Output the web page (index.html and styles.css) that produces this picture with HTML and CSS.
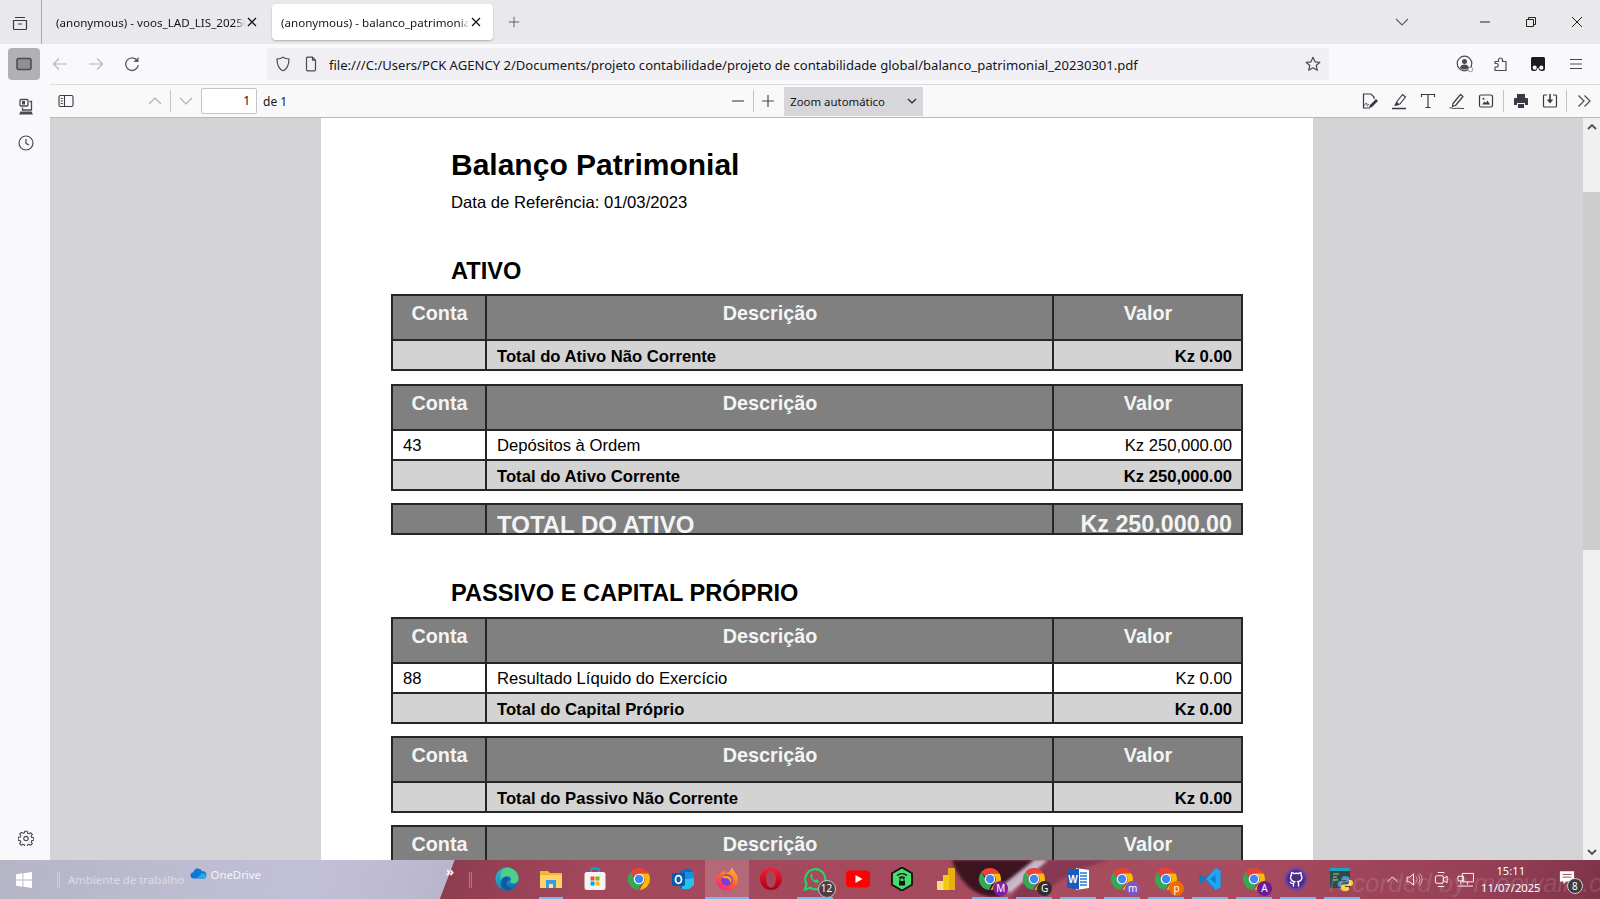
FILE: index.html
```html
<!DOCTYPE html>
<html lang="pt">
<head>
<meta charset="utf-8">
<title>balanco_patrimonial_20230301.pdf</title>
<link rel="stylesheet" href="styles.css">
</head>
<body>
<svg class="defs" width="0" height="0" aria-hidden="true">
  <symbol id="chrome" viewBox="0 0 24 24">
    <path d="M12 1a11 11 0 0 1 9.5 5.5H12a5.5 5.5 0 0 0-5 3.2L3.400 5A11 11 0 0 1 12 1z" fill="#ea4335"/>
    <path d="M21.500 6.500A11 11 0 0 1 12.500 23l4.300-7.500A5.500 5.500 0 0 0 16.800 9.200L12 6.500z" fill="#fbbc04"/>
    <path d="M3.400 5 7.700 12.500a5.500 5.500 0 0 0 6.300 4.500L11 23A11 11 0 0 1 3.400 5z" fill="#34a853"/>
    <circle cx="12" cy="12" r="5.300" fill="#fff"/>
    <circle cx="12" cy="12" r="4.200" fill="#4285f4"/>
  </symbol>
</svg>
<div class="app">
  <header class="tabbar">
    <div class="tab-menu">
      <svg class="i16" viewBox="0 0 16 16"><path d="M3 2.500h10M1.500 5.500h13v8a1 1 0 0 1-1 1h-11a1 1 0 0 1-1-1zM6 9h4" fill="none" stroke="#3a3a44" stroke-width="1.200"/></svg>
    </div>
    <div class="tab tab-first">
      <span class="tab-label">(anonymous) - voos_LAD_LIS_20250710.pdf</span>
      <svg class="tab-x" viewBox="0 0 10 10"><path d="M1 1l8 8M9 1l-8 8" stroke="#15141a" stroke-width="1.300"/></svg>
    </div>
    <div class="tab tab-active">
      <span class="tab-label">(anonymous) - balanco_patrimonial_20230301.pdf</span>
      <svg class="tab-x" viewBox="0 0 10 10"><path d="M1 1l8 8M9 1l-8 8" stroke="#15141a" stroke-width="1.300"/></svg>
    </div>
    <svg class="tab-plus" viewBox="0 0 16 16"><path d="M8 2v12M2 8h12" stroke="#5b5b66" stroke-width="1.100"/></svg>
    <div class="win-controls">
      <svg class="tab-list" viewBox="0 0 14 8"><path d="M1 1l6 6 6-6" fill="none" stroke="#5b5b66" stroke-width="1.100"/></svg>
      <div class="win-btn"><svg class="i12" viewBox="0 0 12 12"><path d="M1 6h10" stroke="#222" stroke-width="1"/></svg></div>
      <div class="win-btn"><svg class="i12" viewBox="0 0 12 12"><path d="M1.500 3.500h7v7h-7zM3.500 3.500v-2h7v7h-2" fill="none" stroke="#222" stroke-width="1"/></svg></div>
      <div class="win-btn"><svg class="i12" viewBox="0 0 12 12"><path d="M1 1l10 10M11 1L1 11" stroke="#222" stroke-width="1"/></svg></div>
    </div>
  </header>

  <nav class="navbar">
    <div class="side-toggle"><svg class="i16" viewBox="0 0 16 16"><rect x="1" y="2.500" width="14" height="11" rx="1.500" fill="#8f8f96" stroke="#4a4a55" stroke-width="1.500"/></svg></div>
    <div class="nav-btn"><svg class="i16" viewBox="0 0 16 16"><path d="M15 8H1.500M7 2.500 1.500 8 7 13.500" fill="none" stroke="#b5b5bb" stroke-width="1.200"/></svg></div>
    <div class="nav-btn"><svg class="i16" viewBox="0 0 16 16"><path d="M1 8h13.500M9 2.500 14.500 8 9 13.500" fill="none" stroke="#b5b5bb" stroke-width="1.200"/></svg></div>
    <div class="nav-btn"><svg class="i16" viewBox="0 0 16 16"><path d="M13.200 4.500A6.300 6.300 0 1 0 14.300 9" fill="none" stroke="#5b5b66" stroke-width="1.300"/><path d="M14.500 1v5h-5z" fill="#5b5b66"/></svg></div>
    <div class="urlbar">
      <svg class="i16 url-shield" viewBox="0 0 16 16"><path d="M8 1.200c2 1.300 3.800 1.700 6 1.800 0 6-1.500 9.800-6 11.800C3.500 12.800 2 9 2 3c2.200-.1 4-.5 6-1.800z" fill="none" stroke="#4a4a55" stroke-width="1.200"/></svg>
      <svg class="i16 url-page" viewBox="0 0 16 16"><path d="M3.500 2a.8.8 0 0 1 .8-.8h5.200l3 3v9.600a1 1 0 0 1-1 1H4.500a1 1 0 0 1-1-1z M9.500 1.200v3h3" fill="none" stroke="#4a4a55" stroke-width="1.200"/></svg>
      <span class="url-text">file:///C:/Users/PCK AGENCY 2/Documents/projeto contabilidade/projeto de contabilidade global/balanco_patrimonial_20230301.pdf</span>
      <svg class="i16 url-star" viewBox="0 0 16 16"><path d="M8 1.300l2 4.500 4.900.5-3.700 3.200 1.100 4.800L8 11.800l-4.300 2.500 1.100-4.800L1.100 6.300 6 5.800z" fill="none" stroke="#4a4a55" stroke-width="1.200" stroke-linejoin="round"/></svg>
    </div>
    <div class="nav-actions">
      <div class="nav-btn"><svg class="i18" viewBox="0 0 18 18"><circle cx="8.500" cy="8.500" r="7.300" fill="none" stroke="#4a4a55" stroke-width="1.200"/><circle cx="8.500" cy="6.500" r="2.500" fill="#4a4a55"/><path d="M4 13c.6-2.500 2.300-3.400 4.500-3.400s3.900.9 4.500 3.400c-2.500 2-6.500 2-9 0z" fill="#4a4a55"/><circle cx="14.500" cy="14.500" r="2.300" fill="#f9f9fb" stroke="#9a9aa2"/></svg></div>
      <div class="nav-btn"><svg class="i16" viewBox="0 0 16 16"><path d="M2 5.500h3.500V4a2 2 0 0 1 4 0v1.500H13V14.500H2V11h1.500a1.700 1.700 0 0 0 0-3.500H2z" fill="none" stroke="#4a4a55" stroke-width="1.200" stroke-linejoin="round"/></svg></div>
      <div class="nav-btn nav-btn-tab"><svg class="i16" viewBox="0 0 16 16"><path d="M2.500 1h11A1.500 1.500 0 0 1 15 2.500v10a2.500 2.500 0 0 1-2.500 2.500h-1.500A3 3 0 0 1 8.500 12h-1A3 3 0 0 1 5 15H3.500A2.500 2.500 0 0 1 1 12.500v-10A1.500 1.500 0 0 1 2.500 1z" fill="#1c1b22"/><circle cx="4.700" cy="11.700" r="2.100" fill="#f9f9fb"/><circle cx="11.300" cy="11.700" r="2.100" fill="#f9f9fb"/></svg></div>
      <div class="nav-btn nav-btn-menu"><svg class="i16" viewBox="0 0 16 16"><path d="M2 3.500h12M2 8h12M2 12.500h12" stroke="#4a4a55" stroke-width="1.200"/></svg></div>
    </div>
  </nav>

  <div class="workspace">
    <aside class="sidebar">
      <svg class="i18 side-ico" viewBox="0 0 18 18"><rect x="3" y="1.500" width="8" height="6.500" rx="1" fill="none" stroke="#4a4a55" stroke-width="1.300"/><rect x="5" y="3" width="3" height="3.500" fill="#4a4a55"/><path d="M12.500 3.500h2v8.500h-9V9.500" fill="none" stroke="#4a4a55" stroke-width="1.300"/><path d="M2 16.500l1.500-3h11l1.500 3z" fill="#4a4a55"/></svg>
      <svg class="i16 side-ico side-clock" viewBox="0 0 16 16"><circle cx="8" cy="8" r="7" fill="none" stroke="#4a4a55" stroke-width="1.200"/><path d="M8 4v4.300l3 1.700" fill="none" stroke="#4a4a55" stroke-width="1.200"/></svg>
      <svg class="i16 side-ico side-gear" viewBox="0 0 16 16"><path d="M6.800 1.200h2.400l.4 2 1.300.6 1.700-1.100 1.700 1.700-1.100 1.700.6 1.300 2 .4v2.400l-2 .4-.6 1.300 1.100 1.700-1.700 1.700-1.700-1.100-1.300.6-.4 2H6.800l-.4-2-1.300-.6-1.700 1.100-1.700-1.700 1.100-1.700-.6-1.300-2-.4V7.400l2-.4.6-1.300-1.100-1.700 1.700-1.700 1.700 1.100 1.300-.6z" fill="none" stroke="#4a4a55" stroke-width="1.100" stroke-linejoin="round"/><circle cx="8" cy="8.600" r="2.200" fill="none" stroke="#4a4a55" stroke-width="1.100"/></svg>
    </aside>

    <main class="viewer">
      <div class="toolbar">
        <div class="tb-left">
          <div class="tb-btn"><svg class="i16" viewBox="0 0 16 16"><rect x="1" y="2.500" width="14" height="11" rx="1.500" fill="none" stroke="#3a3a44" stroke-width="1.100"/><path d="M6.500 2.500v11M2.800 5.500h2M2.800 8h2M2.800 10.500h2" stroke="#3a3a44" stroke-width="1.100"/></svg></div>
          <div class="tb-btn tb-up"><svg class="i14" viewBox="0 0 14 14"><path d="M1 10l6-6 6 6" fill="none" stroke="#b0b0b5" stroke-width="1.200"/></svg></div>
          <span class="tb-sep"></span>
          <div class="tb-btn"><svg class="i14" viewBox="0 0 14 14"><path d="M1 4l6 6 6-6" fill="none" stroke="#b0b0b5" stroke-width="1.200"/></svg></div>
          <div class="page-input">1</div>
          <span class="page-total">de 1</span>
        </div>
        <div class="tb-center">
          <div class="tb-btn"><svg class="i14" viewBox="0 0 14 14"><path d="M1 7h12" stroke="#4a4a55" stroke-width="1.200"/></svg></div>
          <span class="tb-sep"></span>
          <div class="tb-btn"><svg class="i14" viewBox="0 0 14 14"><path d="M1 7h12M7 1v12" stroke="#4a4a55" stroke-width="1.200"/></svg></div>
          <div class="zoom-select"><span>Zoom automático</span><svg class="zoom-caret" viewBox="0 0 10 6"><path d="M1 1l4 4 4-4" fill="none" stroke="#222" stroke-width="1.200"/></svg></div>
        </div>
        <div class="tb-right">
          <div class="tool"><svg class="i18" viewBox="0 0 18 18"><path d="M9 16H2.500V2h7.500l3 3v2" fill="none" stroke="#3a3a44" stroke-width="1.200"/><path d="M3.500 13.500c1.500-3 2-3 2.500-1s1 1 2-.5" fill="none" stroke="#3a3a44"/><path d="M9 13l6-6 2 2-6 6-3 1z" fill="#3a3a44"/></svg></div>
          <div class="tool"><svg class="i18" viewBox="0 0 18 18"><path d="M7 9.500l5.500-7 3 2.500-5.500 7-3.500.5z M5 13.500l1.500-3 2.500 2z" fill="none" stroke="#3a3a44" stroke-width="1.200" stroke-linejoin="round"/><path d="M2 16.500h14" stroke="#3a3a44" stroke-width="1.500"/></svg></div>
          <div class="tool"><svg class="i18" viewBox="0 0 18 18"><path d="M2.500 5V2.500h13V5M9 2.500v13M6.500 15.500h5" fill="none" stroke="#3a3a44" stroke-width="1.200"/></svg></div>
          <div class="tool"><svg class="i18" viewBox="0 0 18 18"><path d="M5 11.500l7.500-9 2.500 2-7.500 9-3 1z" fill="none" stroke="#3a3a44" stroke-width="1.200" stroke-linejoin="round"/><path d="M1.500 16c2-1 3 1 5 .5s6 0 9.500 0" fill="none" stroke="#3a3a44"/></svg></div>
          <div class="tool"><svg class="i16" viewBox="0 0 16 16"><rect x="1.500" y="2" width="13" height="12" rx="1.500" fill="none" stroke="#3a3a44" stroke-width="1.200"/><path d="M4 11.500l2.500-3 1.500 1.500 1.500-2.500 2.500 4z" fill="#3a3a44"/><circle cx="5.500" cy="5.800" r="1" fill="#3a3a44"/></svg></div>
          <span class="tb-sep tb-sep-r"></span>
          <div class="tool"><svg class="i16" viewBox="0 0 16 16"><path d="M4 1h8v4H4zM1 6a1 1 0 0 1 1-1h12a1 1 0 0 1 1 1v6h-3v-2H4v2H1zM5 11h6v4H5z" fill="#3a3a44"/></svg></div>
          <div class="tool"><svg class="i16" viewBox="0 0 16 16"><path d="M5 2H2.500a1 1 0 0 0-1 1v10a1 1 0 0 0 1 1h11a1 1 0 0 0 1-1V3a1 1 0 0 0-1-1H11" fill="none" stroke="#3a3a44" stroke-width="1.200"/><path d="M8 1v7" stroke="#3a3a44" stroke-width="1.600"/><path d="M4.800 6.500h6.400L8 10.500z" fill="#3a3a44"/></svg></div>
          <span class="tb-sep tb-sep-r2"></span>
          <div class="tool"><svg class="i14" viewBox="0 0 14 14"><path d="M1.500 1.500 7 7l-5.500 5.500M7.500 1.500 13 7l-5.500 5.500" fill="none" stroke="#4a4a55" stroke-width="1.200"/></svg></div>
        </div>
      </div>

      <div class="canvas">
        <div class="pages">
          <article class="page">
            <h1 class="doc-title">Balanço Patrimonial</h1>
            <p class="doc-date">Data de Referência: 01/03/2023</p>

            <h2 class="doc-section">ATIVO</h2>
            <table class="sheet sheet-first">
              <colgroup><col class="c-a"><col class="c-b"><col class="c-c"></colgroup>
              <tr class="head"><th>Conta</th><th>Descrição</th><th>Valor</th></tr>
              <tr class="sum"><td></td><td>Total do Ativo Não Corrente</td><td class="num">Kz 0.00</td></tr>
            </table>
            <table class="sheet">
              <colgroup><col class="c-a"><col class="c-b"><col class="c-c"></colgroup>
              <tr class="head"><th>Conta</th><th>Descrição</th><th>Valor</th></tr>
              <tr class="line"><td>43</td><td>Depósitos à Ordem</td><td class="num">Kz 250,000.00</td></tr>
              <tr class="sum"><td></td><td>Total do Ativo Corrente</td><td class="num">Kz 250,000.00</td></tr>
            </table>
            <table class="sheet">
              <colgroup><col class="c-a"><col class="c-b"><col class="c-c"></colgroup>
              <tr class="grand"><td></td><td><div class="cut cut-label">TOTAL DO ATIVO</div></td><td class="num"><div class="cut">Kz 250,000.00</div></td></tr>
            </table>

            <h2 class="doc-section doc-section-2">PASSIVO E CAPITAL PRÓPRIO</h2>
            <table class="sheet">
              <colgroup><col class="c-a"><col class="c-b"><col class="c-c"></colgroup>
              <tr class="head"><th>Conta</th><th>Descrição</th><th>Valor</th></tr>
              <tr class="line"><td>88</td><td>Resultado Líquido do Exercício</td><td class="num">Kz 0.00</td></tr>
              <tr class="sum"><td></td><td>Total do Capital Próprio</td><td class="num">Kz 0.00</td></tr>
            </table>
            <table class="sheet">
              <colgroup><col class="c-a"><col class="c-b"><col class="c-c"></colgroup>
              <tr class="head"><th>Conta</th><th>Descrição</th><th>Valor</th></tr>
              <tr class="sum"><td></td><td>Total do Passivo Não Corrente</td><td class="num">Kz 0.00</td></tr>
            </table>
            <table class="sheet">
              <colgroup><col class="c-a"><col class="c-b"><col class="c-c"></colgroup>
              <tr class="head"><th>Conta</th><th>Descrição</th><th>Valor</th></tr>
            </table>
          </article>
        </div>
        <div class="scrollbar">
          <div class="sb-end"><svg class="sb-arrow" viewBox="0 0 10 6"><path d="M1 5l4-4 4 4" fill="none" stroke="#505050" stroke-width="1.800"/></svg></div>
          <div class="sb-track-top"></div>
          <div class="sb-thumb"></div>
          <div class="sb-track-bottom"></div>
          <div class="sb-end"><svg class="sb-arrow" viewBox="0 0 10 6"><path d="M1 1l4 4 4-4" fill="none" stroke="#505050" stroke-width="1.800"/></svg></div>
        </div>
      </div>
    </main>
  </div>

  <footer class="taskbar">
    <svg class="wallpaper" viewBox="0 0 1600 39" aria-hidden="true">
      <path d="M1040 0h70c-25 6-50 16-72 39h-28z" fill="#6c2a48" opacity=".55"/>
      <path d="M952 0c6 18 20 38 46 37 10-3 18-20 44-37z" fill="#3c1420"/>
      <path d="M1000 27 1034 0h14l-38 33z" fill="#d8d0e4" opacity=".85"/>
    </svg>
    <svg class="win-logo" viewBox="0 0 18 18"><path d="M0 2.600 7.300 1.500v7H0zM8.300 1.400 18 0v8.500H8.300zM0 9.500h7.300v7L0 15.400zM8.300 9.500H18V18l-9.700-1.400z" fill="#fff"/></svg>
    <span class="tb-grip"></span>
    <span class="desk-label">Ambiente de trabalho</span>
    <svg class="cloud" viewBox="0 0 18 12"><path d="M4 11.500a3.500 3.500 0 0 1-.5-7A5 5 0 0 1 13 3.500a4 4 0 0 1 1 8z" fill="#0f78d4"/><path d="M7 11.500 13 5.500c2.500 0 4.500 2 4.500 4s-1 2-2 2z" fill="#28a8ea"/></svg>
    <span class="od-label">OneDrive</span>
    <span class="chev-more">»</span>
    <span class="tb-grip tb-grip-2"></span>

    <div class="apps">
      <div class="app-ico"><svg class="ai" viewBox="0 0 24 24"><defs><linearGradient id="edgeA" x1="0" y1="0" x2="1" y2="1"><stop offset="0" stop-color="#2bc3d2"/><stop offset="1" stop-color="#0c59a4"/></linearGradient></defs><circle cx="12" cy="12" r="11.500" fill="url(#edgeA)"/><path d="M12 .5A11.500 11.500 0 0 1 23.500 12c0 3-2.500 4.500-5 4.500-2 0-3.500-.7-3.500-2 2-1.500 1-5.500-3-5.500-3.500 0-6 2.500-6.500 5C5 7 7 .5 12 .5z" fill="#4fd08a"/><path d="M6 16c0-4 3-6 5.500-6s3.500 2 3 3.500c-1.500 0-3 .5-3 3 0 3 3.500 5 6.500 4.500-2 1.500-4.500 2.500-7 2-3.500-.7-5-4-5-7z" fill="#0c59a4"/></svg></div>
      <div class="app-ico on-split"><svg class="ai" viewBox="0 0 24 24"><path d="M1 4h8l2 2h12v15H1z" fill="#f2b632"/><path d="M1 8h22v13H1z" fill="#fbd667"/><path d="M7 13h10v8H7z" fill="#3b9be0"/><path d="M10 17h4v4h-4z" fill="#f6e7b0"/></svg></div>
      <div class="app-ico"><svg class="ai" viewBox="0 0 24 24"><path d="M8 6V3.500A2 2 0 0 1 10 1.500h4a2 2 0 0 1 2 2V6" fill="none" stroke="#1ba1e2" stroke-width="1.800"/><rect x="1.500" y="5" width="21" height="18" rx="2.500" fill="#f4f4f4"/><path d="M7.500 9.500h4v4h-4z" fill="#f25022"/><path d="M12.500 9.500h4v4h-4z" fill="#7fba00"/><path d="M7.500 14.500h4v4h-4z" fill="#00a4ef"/><path d="M12.500 14.500h4v4h-4z" fill="#ffb900"/></svg></div>
      <div class="app-ico"><svg class="ai"><use href="#chrome"/></svg></div>
      <div class="app-ico"><svg class="ai" viewBox="0 0 24 24"><path d="M9 4l9-2.500 5 4V17l-5 4H9z" fill="#0a6ebd"/><path d="M14 5h9v6h-9z" fill="#1490df"/><path d="M11 12l12-1v7l-5 4H11z" fill="#28c2f1"/><rect x="1" y="6" width="13" height="13" rx="1.500" fill="#0a5aa8"/><ellipse cx="7.500" cy="12.500" rx="3" ry="3.800" fill="none" stroke="#fff" stroke-width="1.800"/></svg></div>
      <div class="app-ico active"><svg class="ai" viewBox="0 0 24 24"><defs><linearGradient id="ffA" x1="0.800" y1="0" x2="0.200" y2="1"><stop offset="0" stop-color="#ffbd2e"/><stop offset=".55" stop-color="#ff5a2c"/><stop offset="1" stop-color="#f3209a"/></linearGradient></defs><path d="M16 .5c3.500 2.500 3.500 4.500 3.500 4.500 2.500 2.500 3.500 5 3.500 7.500a11 11 0 0 1-22 0c0-2.500.8-4.500 2-6 .5 1 1 1.500 1.500 1.500C5.500 5 8 3.500 9.500 3.500 9 4.500 9.500 5.500 10.500 6c2.500-.2 5.500-1.500 5.500-5.500z" fill="url(#ffA)"/><circle cx="12" cy="13" r="5.800" fill="#7b3bd6"/><path d="M7 10c3-2 7-1.500 9 1 1.300 2 .5 4.500-1 5 .5-2.500-1.500-5-4-4.500-1.500-.5-3 0-4-1.500z" fill="#ff9a2e"/></svg></div>
      <div class="app-ico"><svg class="ai" viewBox="0 0 24 24"><defs><linearGradient id="opA" x1="0" y1="0" x2="0" y2="1"><stop offset="0" stop-color="#ff1b2d"/><stop offset="1" stop-color="#a70014"/></linearGradient></defs><circle cx="12" cy="12" r="11" fill="url(#opA)"/><ellipse cx="12" cy="12" rx="5" ry="8.800" fill="#a3485c"/></svg></div>
      <div class="app-ico on"><svg class="ai" viewBox="0 0 24 24"><path d="M2 22.500l1.500-5.500A10 10 0 1 1 7 20.700z" fill="none" stroke="#25d366" stroke-width="2.200"/><path d="M8 7c-1.500 1.500-1 4 1.500 6.500s5 3 6.500 1.500l-.5-1.800-2.500-1-1 1c-1.500-.5-2.700-1.800-3.200-3.200l1-1-1-2.500z" fill="#25d366"/></svg><span class="badge">12</span></div>
      <div class="app-ico"><svg class="ai" viewBox="0 0 24 24"><rect x="0" y="3.500" width="24" height="17" rx="4" fill="#fe0000"/><path d="M9.500 8v8l7-4z" fill="#fff"/></svg></div>
      <div class="app-ico"><svg class="ai" viewBox="0 0 24 24"><path d="M12 .5l10 5.700v11.600l-10 5.700-10-5.700V6.200z" fill="#45dd70" stroke="#111" stroke-width="1.800"/><path d="M7 8.500a8 8 0 0 1 10 0M9 11a5 5 0 0 1 6 0" fill="none" stroke="#111" stroke-width="1.300"/><rect x="9" y="14" width="6" height="4.500" fill="#111"/><path d="M10 14v-1.200a2 2 0 0 1 4 0V14" fill="none" stroke="#111"/></svg></div>
      <div class="app-ico"><svg class="ai" viewBox="0 0 24 24"><path d="M14 1h6a1 1 0 0 1 1 1v21h-7z" fill="#e8b00f"/><path d="M9 8h6v15H9z" fill="#f2c811"/><path d="M3 14h6.500v9H4a1 1 0 0 1-1-1z" fill="#f9e07c"/></svg></div>
      <div class="app-ico on"><svg class="ai"><use href="#chrome"/></svg><span class="prof prof-m">M</span></div>
      <div class="app-ico on"><svg class="ai"><use href="#chrome"/></svg><span class="prof prof-d">G</span></div>
      <div class="app-ico on"><svg class="ai" viewBox="0 0 24 24"><path d="M10 1l13 2v18l-13 2z" fill="#fff"/><path d="M14 6h7M14 9h7M14 12h7M14 15h7M14 18h7" stroke="#2b7cd3" stroke-width="1.500"/><path d="M13 1.500 1 3.500v17l12 2z" fill="#185abd"/><text x="7" y="16" class="word-w">W</text></svg></div>
      <div class="app-ico on"><svg class="ai"><use href="#chrome"/></svg><span class="prof prof-l">m</span></div>
      <div class="app-ico on"><svg class="ai"><use href="#chrome"/></svg><span class="prof prof-o">p</span></div>
      <div class="app-ico on"><svg class="ai" viewBox="0 0 24 24"><path d="M17.500 1 22.500 3.500v17l-5 2.500L7 13l-4 3.200-2-1.100V9l2-1.100L7 11z" fill="#0a7cc4"/><path d="M17.500 1 8 12l9.500 11 5-2.500v-17zM17.500 7.500v9L12.500 12z" fill="#22a5f1" fill-rule="evenodd"/></svg></div>
      <div class="app-ico on"><svg class="ai"><use href="#chrome"/></svg><span class="prof prof-a">A</span></div>
      <div class="app-ico on"><svg class="ai gh" viewBox="0 0 24 24"><circle cx="12" cy="12" r="11.500" fill="#6e40aa"/><circle cx="12" cy="12" r="9" fill="#4b2e83"/><path d="M9.500 19.500v-3c-2.500.5-3-1-3.500-1.800M14.500 19.500v-3.300c0-.8-.3-1.200-.6-1.500 2-.2 4-1 4-4.400 0-1-.3-1.700-.9-2.300.1-.3.400-1.100-.1-2.300 0 0-.8-.3-2.400.9a8 8 0 0 0-4.400 0C8.500 5.400 7.600 5.700 7.600 5.700c-.5 1.200-.2 2-.1 2.300-.6.600-.9 1.400-.9 2.300 0 3.400 2 4.200 4 4.400-.3.300-.5.700-.6 1.300" fill="none" stroke="#fff" stroke-width="1.400"/></svg></div>
      <div class="app-ico on"><svg class="ai" viewBox="0 0 24 24"><rect x="0" y="1" width="20" height="20" rx="1" fill="#2e4a44"/><rect x="0" y="1" width="20" height="3" fill="#1fa4c4"/><path d="M3 7h6M3 10h4M3 13h5" stroke="#9fd0b0"/><path d="M15 9c-3 0-3.500 1-3.500 2.500V13h4v1h-5.500c-1.500 0-2.500 1-2.500 3s1 3 2.500 3h1.500v-2c0-1.500 1-2.500 2.500-2.500h3.500c1.300 0 2-1 2-2v-2C20 10 18 9 15 9z" fill="#4b8bbe"/><path d="M15.500 24c3 0 3.500-1 3.500-2.500V20h-4v-1h5.500c1.500 0 2.500-1 2.500-3s-1-3-2.500-3H19v2c0 1.500-1 2.500-2.500 2.500H13c-1.300 0-2 1-2 2v2c0 1.500 2 2.500 4.500 2.500z" fill="#ffd43b"/></svg></div>
    </div>

    <div class="tray">
      <svg class="ti ti-up" viewBox="0 0 14 8"><path d="M1 7l6-6 6 6" fill="none" stroke="#fff" stroke-width="1.100"/></svg>
      <svg class="ti ti-vol" viewBox="0 0 18 16"><path d="M1 5.500h3L8 2v12l-4-3.500H1z" fill="none" stroke="#fff"/><path d="M10.500 5a4 4 0 0 1 0 6M12.500 3a7 7 0 0 1 0 10M14.500 1.500a9.500 9.500 0 0 1 0 13" fill="none" stroke="#fff" stroke-opacity=".55"/></svg>
      <svg class="ti ti-cam" viewBox="0 0 16 18"><path d="M4 1.500h7M4 16.500h7" stroke="#fff"/><rect x="1.500" y="5" width="8.500" height="8" rx="1.500" fill="none" stroke="#fff"/><path d="M10 8l4-2.500v7L10 10" fill="none" stroke="#fff"/></svg>
      <svg class="ti ti-net" viewBox="0 0 18 16"><path d="M5.500 1.500h12v9h-12zM1 4.500h6v5H1zM11 10.500v3M4 9.500v4M1 15h16" fill="none" stroke="#fff"/></svg>
      <div class="clock"><span>15:11</span><span>11/07/2025</span></div>
      <div class="notif">
        <svg class="notif-ico" viewBox="0 0 18 18"><path d="M1 1.500h16v11.500H8l-3 3v-3H1z" fill="#fff"/><path d="M4 5h10M4 8h10" stroke="#8a3a50"/></svg>
        <span class="notif-badge">8</span>
      </div>
    </div>
    <span class="watermark">recorded by moowalls.com</span>
  </footer>
</div>
</body>
</html>
```

FILE: styles.css
```css
* { box-sizing: border-box; }
html, body { margin: 0; padding: 0; overflow: hidden; }
body { width: 1600px; height: 899px; font-family: "Noto Sans", "Open Sans", sans-serif; color: #15141a; }
.defs { position: absolute; }
svg { display: block; flex: none; }
.i12 { width: 12px; height: 12px; }
.i14 { width: 14px; height: 14px; }
.i16 { width: 16px; height: 16px; }
.i18 { width: 18px; height: 18px; }

.app { width: 1600px; height: 899px; display: flex; flex-direction: column; background: #f9f9fb; }

/* tab strip */
.tabbar { height: 44px; flex: none; display: flex; align-items: center; background: #e9e9ec; }
.tab-menu { width: 42px; height: 44px; display: flex; align-items: center; justify-content: center; padding-right: 2px; padding-top: 1px; border-right: 1px solid #a8a8ae; }
.tab { width: 221px; height: 36px; display: flex; align-items: center; padding: 0 8px; margin-right: 3px; border-radius: 4px; font-size: 11.600px; }
.tab-first { margin-left: 6px; }
.tab-active { background: #fff; box-shadow: 0 1px 2px rgba(0, 0, 0, .25); padding-left: 9px; }
.tab-label { flex: 1; min-width: 0; white-space: nowrap; overflow: hidden; -webkit-mask-image: linear-gradient(90deg, #000 95%, transparent); mask-image: linear-gradient(90deg, #000 95%, transparent); }
.tab-x { width: 10px; height: 10px; margin-left: 2px; margin-right: 4px; }
.tab-plus { width: 14px; height: 14px; margin-left: 11px; }
.win-controls { margin-left: auto; display: flex; align-items: center; height: 100%; }
.tab-list { width: 14px; height: 8px; margin-right: 53px; }
.win-btn { width: 46px; height: 44px; display: flex; align-items: center; justify-content: center; }

/* navigation */
.navbar { height: 40px; flex: none; display: flex; align-items: center; padding-left: 8px; background: #f9f9fb; }
.side-toggle { width: 32px; height: 32px; display: flex; align-items: center; justify-content: center; border-radius: 4px; background: #b1b1b5; margin-right: 2px; }
.nav-btn { width: 36px; height: 32px; display: flex; align-items: center; justify-content: center; }
.urlbar { width: 1062px; height: 32px; margin-left: 117px; display: flex; align-items: center; padding-left: 8px; border-radius: 4px; background: #f0f0f4; font-size: 13.070px; }
.url-page { margin-left: 12px; }
.url-text { margin-left: 10px; padding-top: 1px; white-space: nowrap; }
.url-star { margin-left: auto; margin-right: 8px; }
.nav-actions { margin-left: 118px; display: flex; align-items: center; }
.nav-btn-tab { margin-left: 1px; }
.nav-btn-menu { margin-left: 2px; }

/* workspace */
.workspace { flex: 1; min-height: 0; display: flex; }
.sidebar { width: 50px; flex: none; display: flex; flex-direction: column; align-items: center; padding-top: 14px; background: #f9f9fb; }
.side-ico { margin-left: 1px; }
.side-clock { margin-top: 19px; }
.side-gear { margin-top: auto; margin-bottom: 14px; }
.viewer { flex: 1; min-width: 0; display: flex; flex-direction: column; }

/* pdf toolbar */
.toolbar { height: 34px; flex: none; display: grid; grid-template-columns: 676px 197px 1fr; align-items: center; background: #f9f9fa; border-top: 1px solid #dcdcde; border-bottom: 1px solid #b8b8b8; }
.tb-left, .tb-center, .tb-right { display: flex; align-items: center; height: 100%; }
.tb-left { padding-left: 4px; }
.tb-btn { width: 24px; height: 24px; display: flex; align-items: center; justify-content: center; }
.tb-up { margin-left: 65px; }
.tb-sep { width: 1px; height: 22px; margin: 0 3px; background: #c4c4c8; flex: none; }
.page-input { width: 56px; height: 26px; margin-left: 3px; padding-right: 6px; border: 1px solid #c4c4c8; border-radius: 2px; background: #fff; text-align: right; font-size: 12px; line-height: 24px; }
.page-total { margin-left: 6px; font-size: 12px; }
.zoom-select { width: 141px; height: 29px; margin-left: 4px; padding: 0 6px; display: flex; align-items: center; justify-content: space-between; background: #d7d7db; font-size: 11.400px; }
.zoom-caret { width: 10px; height: 6px; }
.tb-right { justify-content: flex-end; padding-right: 2px; }
.tool { width: 29px; height: 24px; display: flex; align-items: center; justify-content: center; }
.tb-sep-r { margin: 0 2px 0 3px; }
.tb-sep-r2 { margin: 0 2px; }

/* canvas */
.canvas { flex: 1; min-height: 0; display: flex; background: #d4d4d7; }
.pages { flex: 1; min-width: 0; overflow: hidden; display: flex; justify-content: center; padding-left: 1px; }
.page { width: 992px; height: 900px; flex: none; background: #fff; padding-top: 30px; padding-left: 70px; font-family: "Liberation Sans", Arial, sans-serif; color: #000; }
.doc-title { margin: 0 0 0 60px; font-size: 30px; line-height: 34px; font-weight: 700; }
.doc-date { margin: 11px 0 0 60px; font-size: 16.680px; line-height: 20px; }
.doc-section { margin: 44px 0 9px 60px; font-size: 23.600px; line-height: 28px; font-weight: 700; }
.doc-section-2 { margin-top: 44px; margin-bottom: 10px; }

.sheet { width: 850px; table-layout: fixed; border-collapse: collapse; margin-bottom: 12px; }
.sheet-first { margin-bottom: 13px; }
.c-a { width: 94px; }
.c-b { width: 567px; }
.c-c { width: 189px; }
.sheet th, .sheet td { border: 2px solid #262626; padding: 0 9px 0 10px; }
.head th { height: 45px; padding-top: 5px; vertical-align: top; background: #808080; color: #f4f4f4; font-size: 19.800px; line-height: 24px; font-weight: 700; text-align: center; }
.line td { height: 30px; padding-top: 1px; font-size: 16.650px; }
.sum td { height: 30px; padding-top: 3px; background: #d3d3d3; font-size: 16.650px; font-weight: 700; }
.num { text-align: right; }
.grand td { height: 30px; padding-top: 0; padding-bottom: 0; background: #808080; color: #f4f4f4; font-size: 23.300px; font-weight: 700; vertical-align: top; }
.cut { height: 28px; overflow: hidden; line-height: 39px; white-space: nowrap; }
.cut-label { font-size: 24px; }

/* scrollbar */
.scrollbar { width: 17px; flex: none; display: flex; flex-direction: column; background: #f0f0f0; }
.sb-end { height: 17px; flex: none; display: flex; align-items: center; justify-content: center; }
.sb-arrow { width: 10px; height: 6px; }
.sb-track-top { height: 57px; flex: none; }
.sb-thumb { height: 358px; flex: none; background: #cdcdcd; }
.sb-track-bottom { flex: 1; }

/* taskbar */
.taskbar { position: relative; height: 39px; flex: none; display: flex; align-items: center; color: #fff; overflow: hidden; font-family: "Noto Sans", sans-serif;
  background: linear-gradient(111deg, #b5b5c6 0, #c2c0d8 300px, #b9b6cc 424px, #8f3c50 425px, #a3485c 560px, #a84c60 1150px, #953f56 1400px, #7e3349 100%);
}
.wallpaper { position: absolute; left: 0; top: 0; width: 1600px; height: 39px; filter: blur(1.500px); }
.win-logo { width: 16px; height: 16px; margin-left: 16px; position: relative; }
.tb-grip { width: 3px; height: 16px; margin-left: 25px; border-left: 1px solid rgba(255, 255, 255, .3); border-right: 1px solid rgba(255, 255, 255, .3); flex: none; }
.desk-label { margin-left: 8px; font-size: 11.400px; color: rgba(255, 255, 255, .5); white-space: nowrap; }
.cloud { width: 17px; height: 11px; margin-left: 6px; margin-bottom: 13px; }
.od-label { margin-left: 3px; margin-bottom: 10px; font-size: 11.400px; color: #f4f4fa; }
.chev-more { margin-left: 185px; margin-bottom: 16px; font-size: 13px; line-height: 1; font-weight: 700; }
.tb-grip-2 { margin-left: 15px; }
.apps { position: relative; display: flex; height: 100%; margin-left: 13px; }
.app-ico { position: relative; width: 43.950px; height: 39px; display: flex; align-items: center; justify-content: center; flex: none; }
.ai { width: 24px; height: 24px; position: relative; top: -1px; }
.gh { left: -2px; }
.active { background: rgba(255, 255, 255, .18); }
.active::after, .on::after, .on-split::after { content: ""; position: absolute; left: 4px; right: 4px; bottom: 0; height: 2px; background: #7cb6ea; }
.on-split::after { left: 10px; right: 10px; }
.active::after { left: 0; right: 0; }
.badge { position: absolute; right: 1px; bottom: 1px; width: 18px; height: 18px; border-radius: 50%; background: #4a4044; border: 1px solid #c8c4c6; font-size: 10px; line-height: 15px; text-align: center; color: #fff; }
.prof { position: absolute; right: 4px; bottom: 3px; width: 15px; height: 15px; border-radius: 50%; font-size: 10px; line-height: 14px; text-align: center; color: #fff; }
.prof-m { background: #7b1fa2; }
.prof-d { background: #2f2f2f; }
.prof-l { background: #7e57c2; }
.prof-o { background: #ef6c00; }
.prof-a { background: #6a1b9a; }
.word-w { font-family: "Liberation Sans", sans-serif; font-size: 10px; font-weight: 700; fill: #fff; text-anchor: middle; }

.tray { margin-left: 22px; display: flex; align-items: center; height: 100%; flex: none; position: relative; z-index: 1; }
.ti { flex: none; }
.ti-up { width: 13px; height: 7px; }
.ti-vol { width: 17px; height: 15px; margin-left: 7px; }
.ti-cam { width: 15px; height: 17px; margin-left: 11px; }
.ti-net { width: 17px; height: 15px; margin-left: 8px; }
.clock { width: 72px; margin-left: 1px; padding-bottom: 2px; display: flex; flex-direction: column; align-items: center; font-size: 11.200px; line-height: 17px; }
.notif { position: relative; width: 32px; height: 30px; margin-left: 12px; }
.notif-ico { width: 16px; height: 16px; position: absolute; left: 0; top: 5px; }
.notif-badge { position: absolute; left: 8px; top: 13px; width: 16px; height: 16px; border-radius: 50%; background: #3f3a3e; border: 1px solid #cfcfcf; font-size: 10px; line-height: 14px; text-align: center; }
.watermark { position: absolute; left: 1329px; top: 8px; font-family: "Liberation Sans", sans-serif; font-style: italic; font-size: 26px; line-height: 30px; white-space: nowrap; color: rgba(255, 255, 255, .13); pointer-events: none; }
```
